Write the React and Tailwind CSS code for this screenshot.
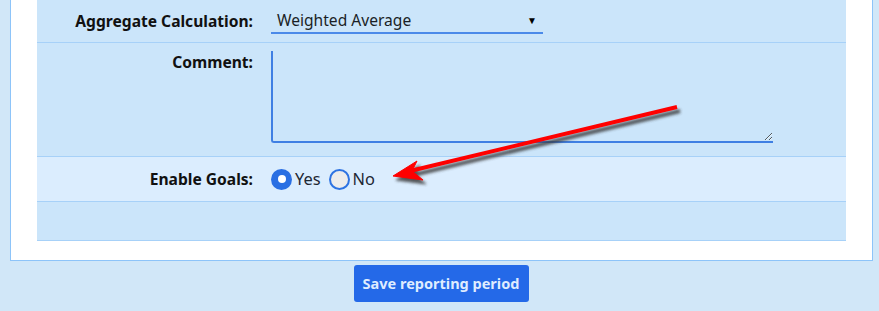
import React, { useState } from "react";

const FONT = { fontFamily: '"Noto Sans", "Open Sans", sans-serif' };

function Row({ label, children, className = "", labelClass = "items-center" }) {
  return (
    <div className={`grid grid-cols-[216px_1fr] gap-x-[18px] border-b border-[#a7d1f8] ${className}`}>
      <div className={`flex justify-end ${labelClass}`}>
        <span className="text-[15.6px] font-bold leading-[22px] text-[#111]">{label}</span>
      </div>
      <div className="flex items-center">{children}</div>
    </div>
  );
}

function Radio({ checked, label, onClick }) {
  return (
    <button onClick={onClick} className="flex items-center gap-[3px]">
      {checked ? (
        <span className="flex h-[21px] w-[21px] items-center justify-center rounded-full bg-[#2a6fe3]">
          <span className="h-[8px] w-[8px] rounded-full bg-white" />
        </span>
      ) : (
        <span className="h-[21px] w-[21px] rounded-full border-2 border-[#2e73e2] bg-[#ececec]" />
      )}
      <span className="text-[16.4px] leading-[22px] text-[#1d2733]">{label}</span>
    </button>
  );
}

export default function App() {
  const [goals, setGoals] = useState(true);

  return (
    <div className="relative h-[311px] w-full overflow-hidden bg-[#d1e7f8]" style={FONT}>
      <div className="ml-[10px] w-[863px] border-x border-b border-[#8dc4f9] bg-white px-[26px] pb-[19px]">
        <div className="bg-[#cbe5fa]">
          <Row label="Aggregate Calculation:" className="h-[43px] pt-[9px]" labelClass="items-start pt-[1px]">
            <div className="flex h-[25px] w-[272px] items-center justify-between self-start border-b-2 border-[#4b8ae9] pl-[6px] pr-[6px]">
              <span className="text-[15.6px] text-[#1a1f26]">Weighted Average</span>
              <span className="text-[10px] text-black">▼</span>
            </div>
          </Row>
          <Row label="Comment:" className="h-[114px] pt-[8px]" labelClass="items-start">
            <textarea className="h-[92px] w-[502px] self-start resize rounded-bl-[3px] border-b-2 border-l-2 border-[#3f7fe3] bg-transparent outline-none" />
          </Row>
          <Row label="Enable Goals:" className="h-[45px] bg-[#dbedfe]">
            <div className="flex items-center gap-[8px]">
              <Radio checked={goals} label="Yes" onClick={() => setGoals(true)} />
              <Radio checked={!goals} label="No" onClick={() => setGoals(false)} />
            </div>
          </Row>
          <div className="h-[39px] border-b border-[#a7d1f8]" />
        </div>
      </div>
      <div className="mt-[4px] flex justify-center pl-[3px]">
        <button className="h-[37px] w-[175px] rounded-[3px] bg-[#2469e8] text-[14.5px] font-bold text-[#dfecff]">
          Save reporting period
        </button>
      </div>

      <svg className="pointer-events-none absolute left-0 top-0" width="879" height="311">
        <defs>
          <filter id="sh" x="-20%" y="-50%" width="140%" height="200%">
            <feGaussianBlur stdDeviation="1.6" />
          </filter>
        </defs>
        <g transform="translate(3 4)" filter="url(#sh)" fill="#3a3a3a" stroke="#3a3a3a" opacity="0.85">
          <line x1="677" y1="107" x2="410" y2="171" strokeWidth="4" />
          <polygon points="393,176 417,161 412,171 423,180" strokeWidth="1" />
        </g>
        <g fill="#ff0000" stroke="#ff0000">
          <line x1="677" y1="107" x2="410" y2="171" strokeWidth="4" />
          <polygon points="393,176 417,161 412,171 423,180" strokeWidth="1" />
        </g>
      </svg>
    </div>
  );
}
